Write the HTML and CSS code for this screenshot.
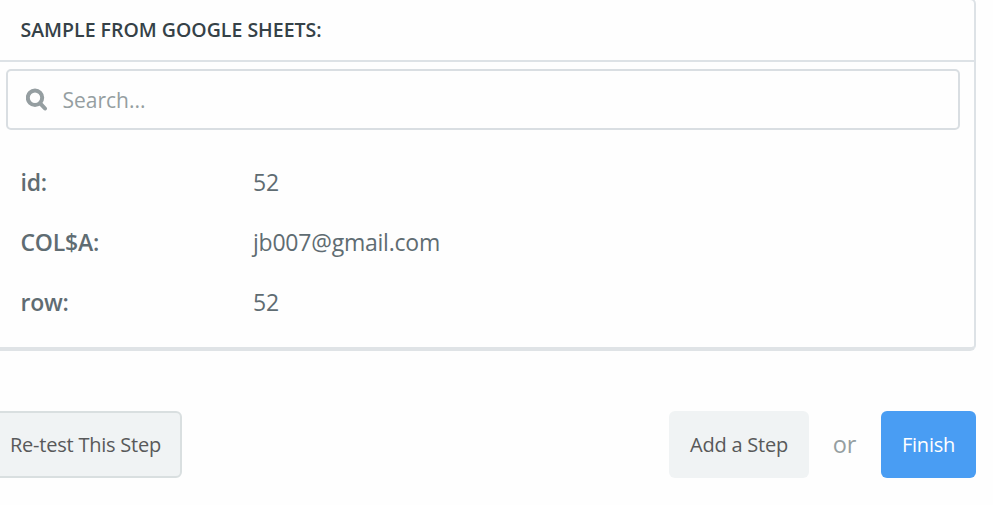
FILE: index.html
```html
<!DOCTYPE html>
<html lang="en">
<head>
    <meta charset="UTF-8">
    <meta name="viewport" content="width=device-width, initial-scale=1.0">
    <title>Test Step</title>
    <link rel="stylesheet" href="styles.css">
</head>
<body>
    <div class="sample-card">
        <h2 class="sample-title"><span>SAMPLE FROM GOOGLE SHEETS:</span></h2>
        <label class="search-box">
            <svg class="search-icon" width="22" height="23" viewBox="0 0 22 23">
                <circle cx="9" cy="9.8" r="7.2" fill="none" stroke="#959ea1" stroke-width="4"/>
                <path d="M14.2 15.3 L19 20.5" fill="none" stroke="#959ea1" stroke-width="4" stroke-linecap="round"/>
            </svg>
            <input class="search-input" type="text" placeholder="Search...">
        </label>
        <dl class="sample-fields">
            <dt><span>id:</span></dt>
            <dd><span>52</span></dd>
            <dt><span>COL$A:</span></dt>
            <dd><span>jb007@gmail.com</span></dd>
            <dt><span>row:</span></dt>
            <dd><span>52</span></dd>
        </dl>
    </div>

    <div class="actions">
        <button class="button button-retest"><span>Re-test This Step</span></button>
        <button class="button button-add"><span>Add a Step</span></button>
        <span class="or">or</span>
        <button class="button button-finish"><span>Finish</span></button>
    </div>
</body>
</html>
```
FILE: styles.css
```css
body {
    margin: 0;
    background: #fefefe;
    font-family: "Open Sans", sans-serif;
    overflow: hidden;
}

.sample-card {
    box-sizing: border-box;
    height: 353px;
    margin: -2px 17px 0 -12px;
    border: 2px solid #dde2e6;
    border-bottom: 4px solid #dfe3e6;
    border-radius: 6px;
}
.sample-title {
    box-sizing: border-box;
    height: 62px;
    margin: 0;
    padding-left: 30.5px;
    border-bottom: 2px solid #dde2e6;
    color: #354147;
    font-size: 19.5px;
    font-weight: 600;
    line-height: 60px;
}
.search-box {
    display: flex;
    align-items: center;
    box-sizing: border-box;
    height: 61px;
    margin: 7px 14px 0 16px;
    padding-left: 18px;
    border: 2px solid #d9dee2;
    border-radius: 5px;
}
.search-input {
    flex: 1;
    margin-left: 14.5px;
    padding: 0;
    border: none;
    outline: none;
    background: none;
    color: #5f6c72;
    font-family: inherit;
    font-size: 21px;
}
.search-input::placeholder {
    color: #959ea1;
}

.sample-fields {
    display: grid;
    grid-template-columns: 232.5px 1fr;
    margin: 22px 0 0;
    padding-left: 30.5px;
    color: #5f6c72;
    font-size: 23px;
    line-height: 60px;
    letter-spacing: -0.22px;
}
.sample-fields dt {
    font-weight: 600;
}
.sample-fields dd {
    margin: 0;
}

.actions {
    display: flex;
    align-items: center;
    margin: 60px 17px 0 -12px;
}
.button {
    box-sizing: border-box;
    height: 67px;
    padding: 0;
    border: none;
    border-radius: 6px;
    background: #f0f3f4;
    color: #58595a;
    font-family: inherit;
    font-size: 20px;
    letter-spacing: -0.22px;
    cursor: pointer;
}
.button-retest {
    width: 194px;
    padding-left: 1px;
    margin-right: auto;
    border: 2px solid #d9dfe0;
}
.button-add {
    width: 140px;
}
.button-finish {
    width: 95px;
    background: #499df3;
    color: #fff;
}
.or {
    width: 71px;
    padding: 0 1px 2px 0;
    text-align: center;
    color: #959ea1;
    font-size: 23.5px;
}
```
